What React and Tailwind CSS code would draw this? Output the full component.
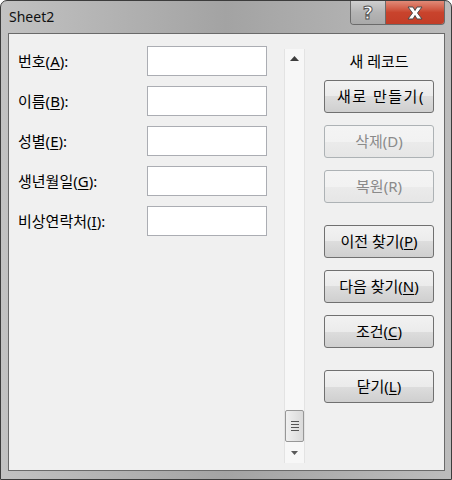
import React from "react";

const fields = [
  { label: "번호", key: "A" },
  { label: "이름", key: "B" },
  { label: "성별", key: "E" },
  { label: "생년월일", key: "G" },
  { label: "비상연락처", key: "I" },
];

function Mnemonic({ text, k, tail = "" }) {
  return (
    <span>
      {text}(<span className="underline underline-offset-2">{k}</span>){tail}
    </span>
  );
}

function DlgButton({ children, disabled, className = "" }) {
  return (
    <div
      className={
        "flex h-[33px] w-[110px] items-center rounded-[3px] border " +
        (disabled
          ? "border-[#adb2b5] bg-[linear-gradient(#f4f4f4,#f2f2f2_50%,#ebebeb_50%,#e6e6e6)] text-[#8a8a8a] "
          : "border-[#707070] bg-[linear-gradient(#f2f2f2,#ebebeb_50%,#dddddd_50%,#cfcfcf)] text-black ") +
        className
      }
    >
      {children}
    </div>
  );
}

function ScrollBar() {
  return (
    <div className="mt-[3px] flex h-[414px] w-[21px] flex-col items-center border-x border-[#e3e3e3] bg-[#f7f7f7]">
      <svg width="9" height="5" className="mt-[7px]" viewBox="0 0 9 5">
        <path d="M4.5 0 L9 5 L0 5 Z" fill="#3d3d3d" />
      </svg>
      <div className="flex-1" />
      <div className="flex h-[32px] w-[19px] flex-col items-center justify-center gap-[2px] rounded-[2px] border border-[#979797] bg-gradient-to-r from-[#f0f0f0] to-[#dadada]">
        <div className="h-px w-[8px] bg-[#555]" />
        <div className="h-px w-[8px] bg-[#555]" />
        <div className="h-px w-[8px] bg-[#555]" />
        <div className="h-px w-[8px] bg-[#555]" />
      </div>
      <svg width="7" height="4" className="mb-[8px] mt-[9px]" viewBox="0 0 7 4">
        <path d="M0 0 L7 0 L3.5 4 Z" fill="#5a5a5a" />
      </svg>
    </div>
  );
}

export default function App() {
  return (
    <div
      className="flex h-[480px] w-[452px] flex-col overflow-hidden rounded-t-[7px] border border-[#3c3c3c] bg-gradient-to-r from-[#c2c2c2] via-[#a3a3a3] to-[#bcbcbc] text-[15px]"
      style={{ fontFamily: '"Noto Sans", "Noto Sans CJK KR", sans-serif' }}
    >
      <div className="flex h-[32px] shrink-0 items-start">
        <div className="ml-[8px] mt-[5px] text-[14px] text-[#101010]">Sheet2</div>
        <div className="flex-1" />
        <div className="mr-[6px] flex h-[24px] overflow-hidden rounded-b-[4px] border border-t-0 border-[#6a6a6a]">
          <div className="flex w-[35px] items-center justify-center border-r border-[#6a6a6a] bg-gradient-to-b from-[#cfcfcf] via-[#b4b4b4] to-[#a9a9a9]">
            <span className="text-[18px] font-bold leading-none text-white [-webkit-text-stroke:1px_#555]" style={{ fontFamily: '"DejaVu Sans", sans-serif' }}>?</span>
          </div>
          <div className="flex w-[58px] items-center justify-center bg-gradient-to-b from-[#e08a78] via-[#c9432c] to-[#c23d27]">
            <svg width="18" height="14" viewBox="0 0 18 14">
              <path d="M2 1 L7 1 L9 4.5 L11 1 L16 1 L11.5 7 L16 13 L11 13 L9 9.5 L7 13 L2 13 L6.5 7 Z" fill="#ffffff" stroke="#4a4a4a" strokeWidth="1" strokeLinejoin="round" />
            </svg>
          </div>
        </div>
      </div>
      <div className="mb-[8px] ml-[7px] mr-[6px] flex flex-1 border border-[#6a6a6a] bg-[#f0f0f0] pl-[9px] pt-[12px]">
        <div className="flex flex-col gap-[10px]">
          {fields.map((f) => (
            <div key={f.key} className="flex h-[30px] items-center">
              <div className="w-[129px] text-black">
                <Mnemonic text={f.label} k={f.key} tail=":" />
              </div>
              <div className="h-[30px] w-[120px] border border-[#abadb3] bg-white" />
            </div>
          ))}
        </div>
        <div className="ml-[17px]">
          <ScrollBar />
        </div>
        <div className="ml-[19px] flex flex-col">
          <div className="mb-[9px] mt-[5px] text-center leading-[20px] text-black">새 레코드</div>
          <DlgButton className="justify-start overflow-hidden whitespace-nowrap pl-[12px] tracking-[1.5px]">새로 만들기(</DlgButton>
          <DlgButton disabled className="mt-[12px] justify-center">삭제(D)</DlgButton>
          <DlgButton disabled className="mt-[12px] justify-center">복원(R)</DlgButton>
          <DlgButton className="mt-[22px] justify-center">
            <Mnemonic text="이전 찾기" k="P" />
          </DlgButton>
          <DlgButton className="mt-[12px] justify-center">
            <Mnemonic text="다음 찾기" k="N" />
          </DlgButton>
          <DlgButton className="mt-[12px] justify-center">
            <Mnemonic text="조건" k="C" />
          </DlgButton>
          <DlgButton className="mt-[22px] justify-center">
            <Mnemonic text="닫기" k="L" />
          </DlgButton>
        </div>
      </div>
    </div>
  );
}
